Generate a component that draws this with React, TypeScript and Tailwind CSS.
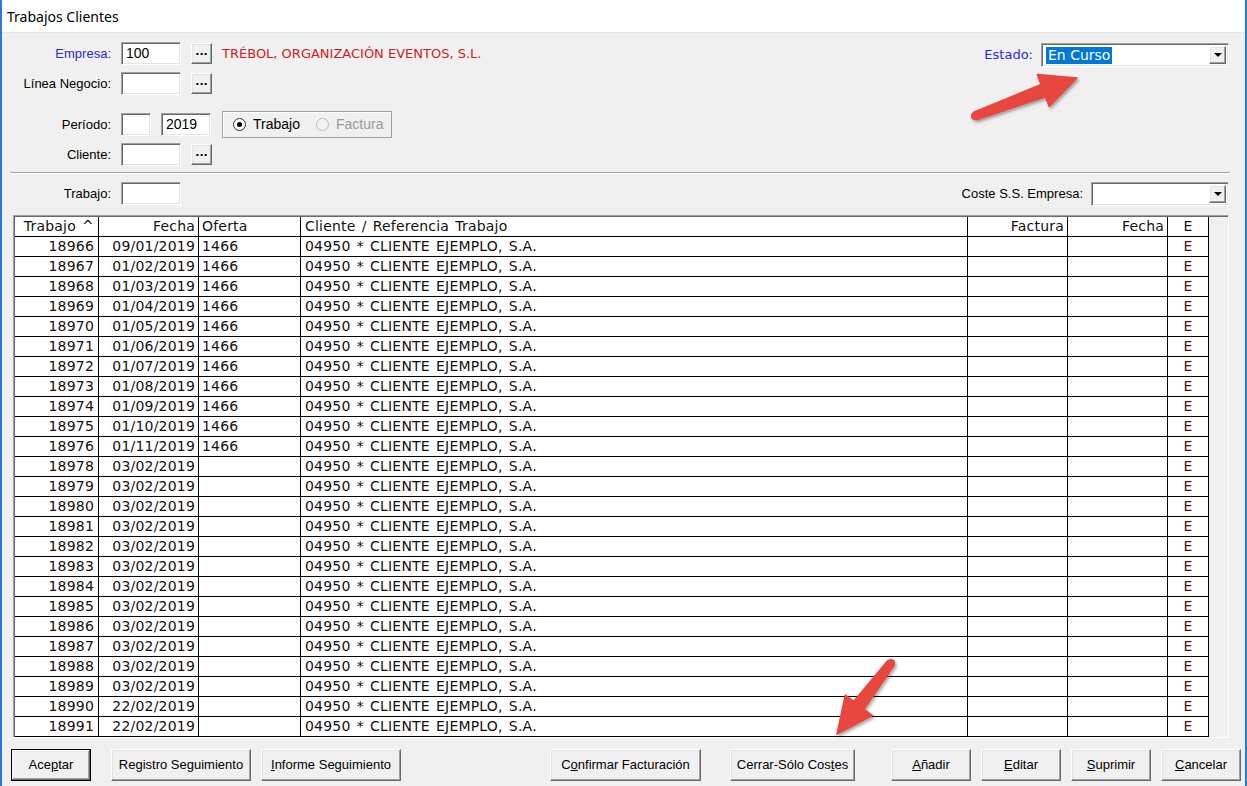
import React from 'react';

const ui = "font-['Liberation_Sans',Arial,sans-serif] text-[13px]";
const grid = "font-['DejaVu_Sans',Verdana,sans-serif] text-[13px]";
const tbl = "font-['DejaVu_Sans',Verdana,sans-serif] text-[14px] tracking-[0.2px] [word-spacing:1.5px]";
const sunken =
  'bg-white border border-[#a0a0a0] border-r-white border-b-white shadow-[inset_1px_1px_0_#696969,inset_-1px_-1px_0_#e3e3e3]';
const raised =
  'bg-[#f0f0f0] border border-white border-r-[#696969] border-b-[#696969] shadow-[inset_-1px_-1px_0_#a0a0a0,inset_1px_1px_0_#e3e3e3]';

type Row = [string, string, string];

const rows: Row[] = [
  ['18966', '09/01/2019', '1466'],
  ['18967', '01/02/2019', '1466'],
  ['18968', '01/03/2019', '1466'],
  ['18969', '01/04/2019', '1466'],
  ['18970', '01/05/2019', '1466'],
  ['18971', '01/06/2019', '1466'],
  ['18972', '01/07/2019', '1466'],
  ['18973', '01/08/2019', '1466'],
  ['18974', '01/09/2019', '1466'],
  ['18975', '01/10/2019', '1466'],
  ['18976', '01/11/2019', '1466'],
  ['18978', '03/02/2019', ''],
  ['18979', '03/02/2019', ''],
  ['18980', '03/02/2019', ''],
  ['18981', '03/02/2019', ''],
  ['18982', '03/02/2019', ''],
  ['18983', '03/02/2019', ''],
  ['18984', '03/02/2019', ''],
  ['18985', '03/02/2019', ''],
  ['18986', '03/02/2019', ''],
  ['18987', '03/02/2019', ''],
  ['18988', '03/02/2019', ''],
  ['18989', '03/02/2019', ''],
  ['18990', '22/02/2019', ''],
  ['18991', '22/02/2019', ''],
];

function Field({ className, value }: { className: string; value?: string }) {
  return (
    <div className={`${sunken} ${className} h-[23px] flex items-center pl-[4px] ${ui} text-[14px] text-black`}>
      {value}
    </div>
  );
}

function Dots() {
  return (
    <div className={`${raised} w-[21px] h-[21px] flex items-center justify-center`}>
      <span className="font-['DejaVu_Sans',sans-serif] text-[11px] font-bold leading-none -mt-[4px]">...</span>
    </div>
  );
}

function Combo({ className, children }: { className: string; children?: React.ReactNode }) {
  return (
    <div className={`${sunken} ${className} flex items-stretch p-[2px]`}>
      <div className="flex-1 flex items-center pl-[2px]">{children}</div>
      <div className={`${raised} w-[17px] flex items-center justify-center`}>
        <div className="w-0 h-0 border-l-[4px] border-r-[4px] border-t-[4px] border-l-transparent border-r-transparent border-t-black" />
      </div>
    </div>
  );
}

function Label({ children, className = '' }: { children: React.ReactNode; className?: string }) {
  return <div className={`w-[109px] text-right ${ui} ${className}`}>{children}</div>;
}

function Btn({ className, children, def }: { className: string; children: React.ReactNode; def?: boolean }) {
  return (
    <div
      className={`${className} h-[32px] flex items-center justify-center ${ui} text-black ${
        def
          ? 'bg-[#f0f0f0] border border-black shadow-[inset_-1px_-1px_0_#696969,inset_1px_1px_0_#fff,inset_-2px_-2px_0_#a0a0a0]'
          : raised
      }`}
    >
      {children}
    </div>
  );
}

function Arrow({ x1, y1, x2, y2 }: { x1: number; y1: number; x2: number; y2: number }) {
  const dx = x2 - x1;
  const dy = y2 - y1;
  const len = Math.hypot(dx, dy);
  const ux = dx / len;
  const uy = dy / len;
  const px = -uy;
  const py = ux;
  const hl = 36;
  const hw = 17;
  const tw = 4;
  const nw = 6.5;
  const bx = x2 - ux * hl;
  const by = y2 - uy * hl;
  const p = (x: number, y: number) => `${x.toFixed(1)},${y.toFixed(1)}`;
  const pts = [
    p(x1 + px * tw, y1 + py * tw),
    p(bx + px * nw, by + py * nw),
    p(bx + px * hw, by + py * hw),
    p(x2, y2),
    p(bx - px * hw, by - py * hw),
    p(bx - px * nw, by - py * nw),
    p(x1 - px * tw, y1 - py * tw),
  ].join(' ');
  return (
    <g filter="url(#sh)">
      <circle cx={x1} cy={y1} r={tw} fill="#e8473f" />
      <polygon points={pts} fill="#e8473f" strokeLinejoin="round" stroke="#e8473f" strokeWidth={1.5} />
    </g>
  );
}

const cols = 'grid grid-cols-[84px_100px_102px_667px_100px_100px_41px]';
const cell = 'h-[20px] border-r border-b border-black flex items-center whitespace-nowrap overflow-hidden';

export default function App() {
  return (
    <div className="relative w-[1247px] h-[786px] bg-[#f0f0f0] border-x-2 border-[#2c7ad6] overflow-hidden">
      {/* title */}
      <div className="h-[33px] bg-white border-b border-[#e6e6e6] flex items-center pl-[5px] font-['Noto_Sans',sans-serif] text-[14px] text-black">
        Trabajos Clientes
      </div>

      {/* filter area */}
      <div className="flex">
        <div className="flex flex-col pt-[9px]">
          <div className="flex items-center h-[23px]">
            <Label className="text-[#2b2bd6]">Empresa:</Label>
            <Field className="ml-[10px] w-[60px]" value="100" />
            <div className="ml-[10px]">
              <Dots />
            </div>
            <div className={`ml-[10px] ${grid} text-[#d31a22]`}>TRÉBOL, ORGANIZACIÓN EVENTOS, S.L.</div>
          </div>
          <div className="flex items-center h-[23px] mt-[7px]">
            <Label>Línea Negocio:</Label>
            <Field className="ml-[10px] w-[60px]" />
            <div className="ml-[10px]">
              <Dots />
            </div>
          </div>
          <div className="flex items-center h-[27px] mt-[16px]">
            <Label>Período:</Label>
            <Field className="ml-[10px] w-[30px]" />
            <Field className="ml-[10px] w-[50px]" value="2019" />
            <div className="ml-[11px] w-[170px] h-[27px] border border-[#a0a0a0] shadow-[inset_1px_1px_0_#fff] flex items-center pl-[10px]">
              <div className="w-[13px] h-[13px] rounded-full border border-[#333] bg-white flex items-center justify-center">
                <div className="w-[5px] h-[5px] rounded-full bg-black" />
              </div>
              <span className={`ml-[7px] ${ui} text-[14px]`}>Trabajo</span>
              <div className="ml-[16px] w-[13px] h-[13px] rounded-full border border-[#bcbcbc] bg-[#f4f4f4]" />
              <span className={`ml-[7px] ${ui} text-[14px] text-[#9a9a9a]`}>Factura</span>
            </div>
          </div>
          <div className="flex items-center h-[23px] mt-[5px]">
            <Label>Cliente:</Label>
            <Field className="ml-[10px] w-[60px]" />
            <div className="ml-[10px]">
              <Dots />
            </div>
          </div>
        </div>

        <div className="ml-auto mr-[16px] mt-[10px] flex items-center h-[24px]">
          <span className={`${grid} text-[#2b2bd6]`}>Estado:</span>
          <Combo className="ml-[8px] w-[188px] h-[24px]">
            <span className={`${grid} text-[14px] bg-[#0078d7] text-white px-[2px] leading-[17px]`}>En Curso</span>
          </Combo>
        </div>
      </div>

      {/* separator */}
      <div className="mt-[6px] ml-[8px] w-[1220px] border-t border-[#a0a0a0] border-b border-b-white" />

      <div className="flex items-center h-[23px] mt-[8px]">
        <Label>Trabajo:</Label>
        <Field className="ml-[10px] w-[60px]" />
        <span className={`ml-auto ${ui}`}>Coste S.S. Empresa:</span>
        <Combo className="ml-[8px] mr-[16px] w-[138px] h-[24px]" />
      </div>

      {/* grid */}
      <div className="mt-[10px] ml-[11px] w-[1216px] h-[523px] bg-[#f0f0f0] border border-[#a0a0a0] border-r-white border-b-white shadow-[inset_1px_1px_0_#696969] pt-[1px] pl-[1px]">
        <div className={`${cols} w-[1194px] bg-white ${tbl} text-[#111]`}>
          <div className={`${cell} justify-end pr-[4px]`}>Trabajo ^</div>
          <div className={`${cell} justify-end pr-[3px]`}>Fecha</div>
          <div className={`${cell} pl-[3px]`}>Oferta</div>
          <div className={`${cell} pl-[4px]`}>Cliente / Referencia Trabajo</div>
          <div className={`${cell} justify-end pr-[3px]`}>Factura</div>
          <div className={`${cell} justify-end pr-[3px]`}>Fecha</div>
          <div className={`${cell} justify-center`}>E</div>
          {rows.map(([t, f, o]) => (
            <React.Fragment key={t}>
              <div className={`${cell} justify-end pr-[4px]`}>{t}</div>
              <div className={`${cell} justify-end pr-[3px]`}>{f}</div>
              <div className={`${cell} pl-[3px]`}>{o}</div>
              <div className={`${cell} pl-[4px]`}>04950 * CLIENTE EJEMPLO, S.A.</div>
              <div className={cell} />
              <div className={cell} />
              <div className={`${cell} justify-center text-[#4a1418]`}>E</div>
            </React.Fragment>
          ))}
        </div>
      </div>

      {/* buttons */}
      <div className="flex mt-[11px] ml-[9px]">
        <Btn className="w-[80px]" def>
          <span>
            Ace<u>p</u>tar
          </span>
        </Btn>
        <Btn className="ml-[20px] w-[140px]">Registro Seguimiento</Btn>
        <Btn className="ml-[10px] w-[140px]">
          <span>
            <u>I</u>nforme Seguimiento
          </span>
        </Btn>
        <Btn className="ml-[149px] w-[151px]">
          <span>
            C<u>o</u>nfirmar Facturación
          </span>
        </Btn>
        <Btn className="ml-[29px] w-[125px]">
          <span>
            Cerrar-Sólo Cos<u>t</u>es
          </span>
        </Btn>
        <Btn className="ml-[36px] w-[80px]">
          <span>
            <u>A</u>ñadir
          </span>
        </Btn>
        <Btn className="ml-[10px] w-[80px]">
          <span>
            <u>E</u>ditar
          </span>
        </Btn>
        <Btn className="ml-[10px] w-[80px]">
          <span>
            <u>S</u>uprimir
          </span>
        </Btn>
        <Btn className="ml-[10px] w-[80px]">
          <span>
            <u>C</u>ancelar
          </span>
        </Btn>
      </div>

      {/* annotation arrows */}
      <svg className="absolute left-[-2px] top-0 pointer-events-none" width={1247} height={786}>
        <defs>
          <filter id="sh" x="-20%" y="-20%" width="140%" height="140%">
            <feDropShadow dx="1.5" dy="2" stdDeviation="1.8" floodColor="#000" floodOpacity="0.35" />
          </filter>
        </defs>
        <Arrow x1={975} y1={116} x2={1077} y2={78} />
        <Arrow x1={891} y1={663} x2={837} y2={734} />
      </svg>
    </div>
  );
}
